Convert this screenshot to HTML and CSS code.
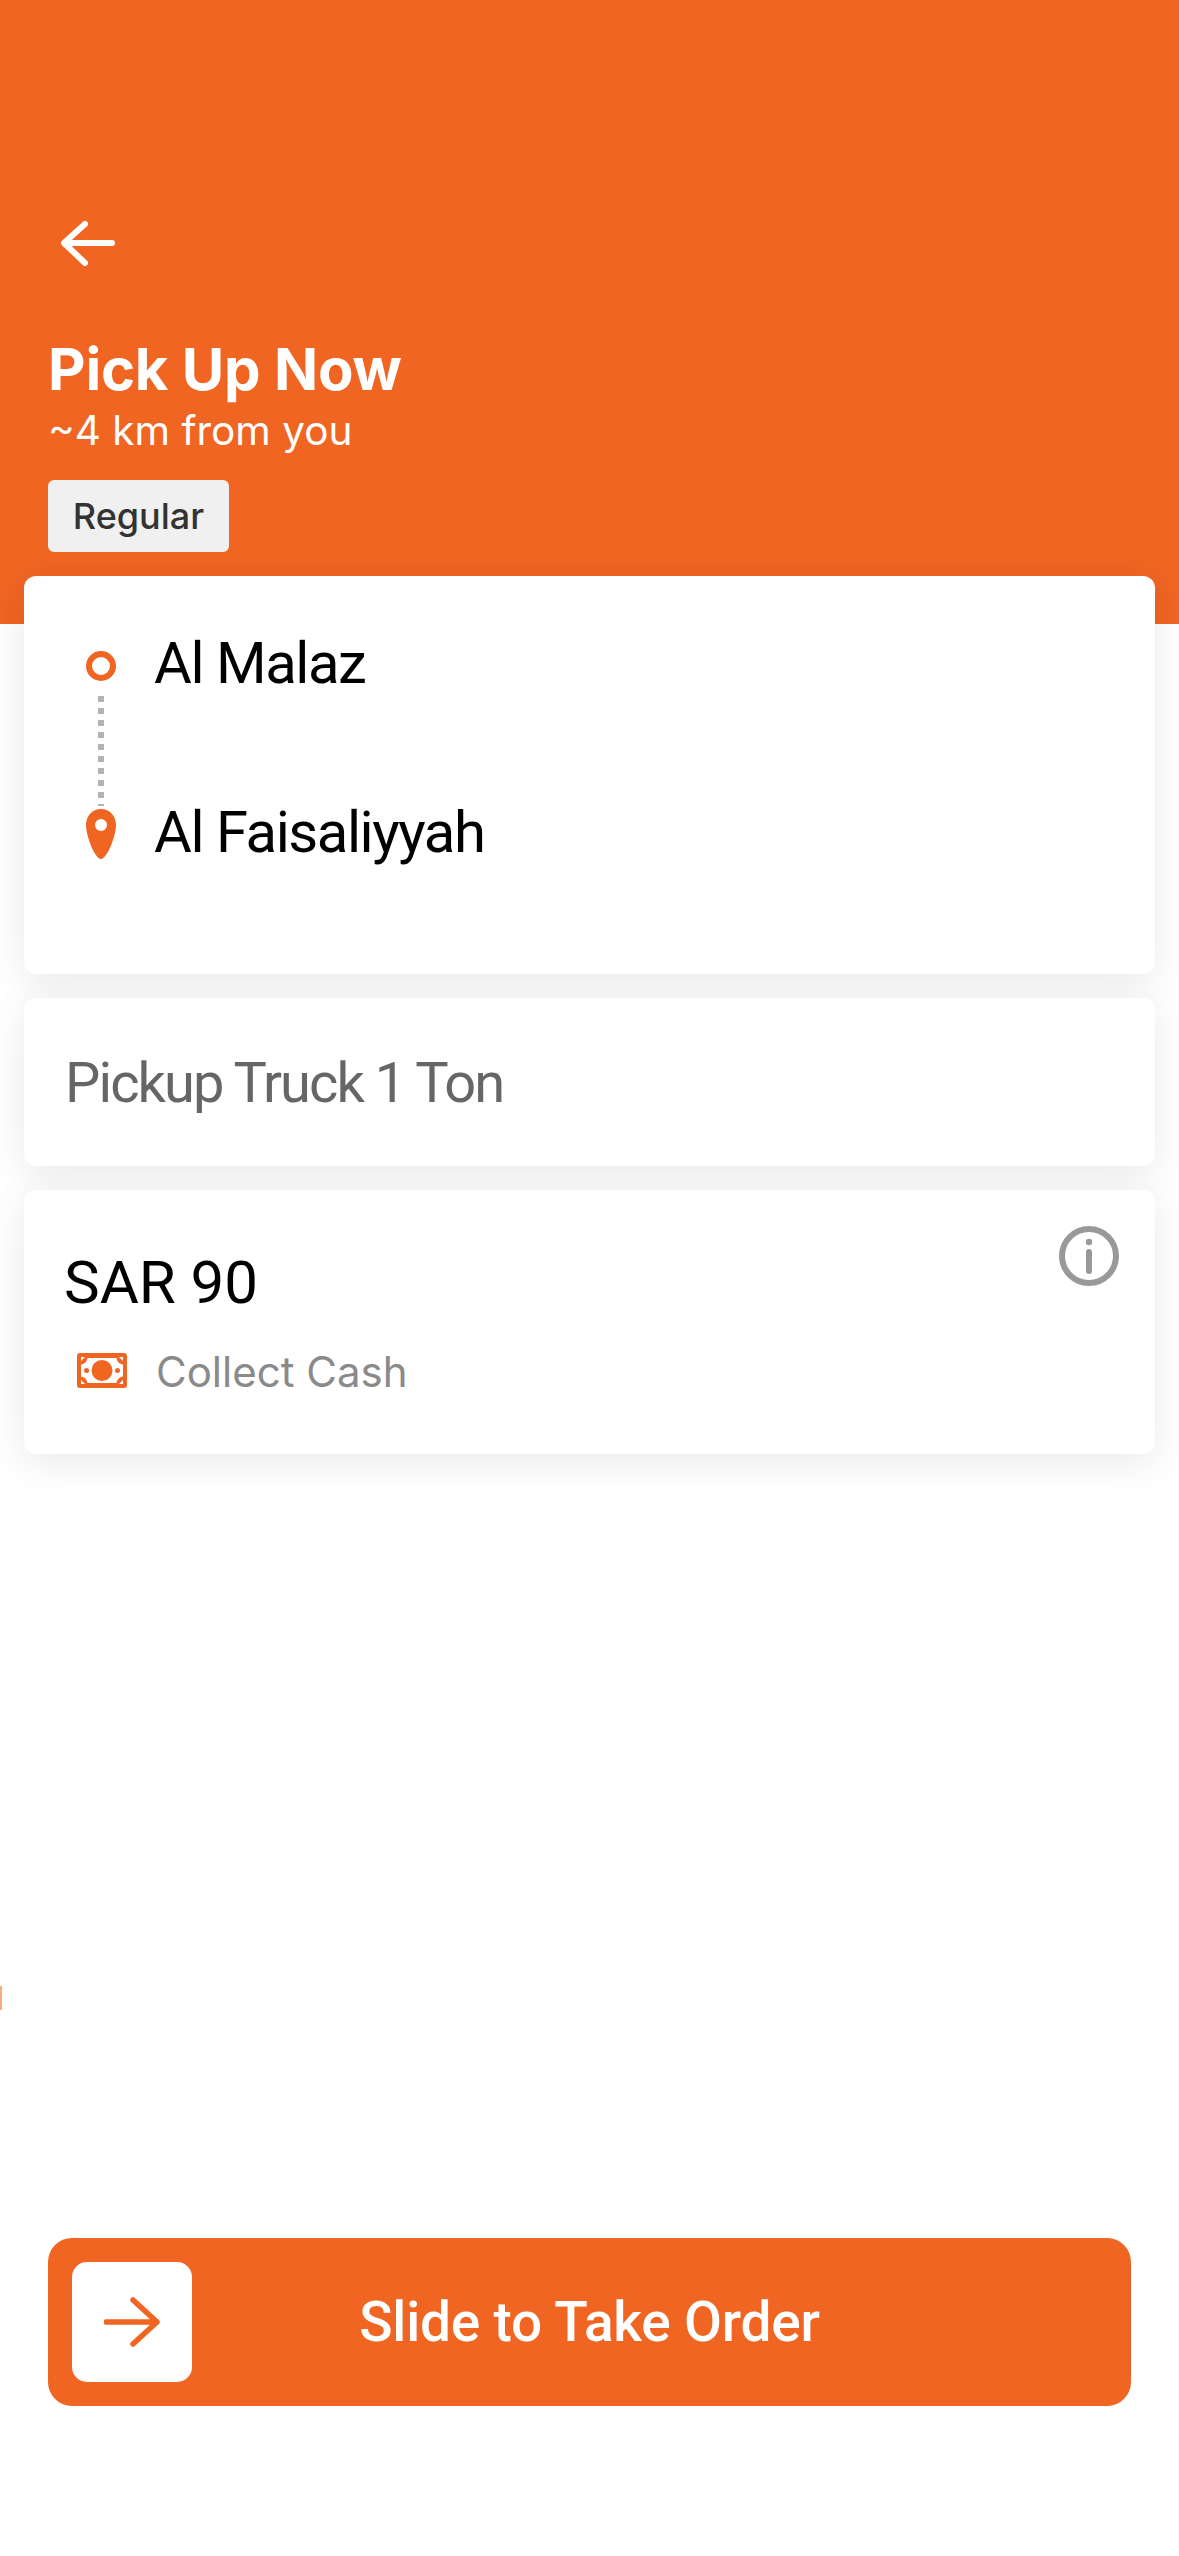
FILE: index.html
```html
<!DOCTYPE html>
<html lang="en">
<head>
<meta charset="utf-8">
<title>Pick Up Now</title>
<link rel="stylesheet" href="styles.css">
</head>
<body>
<div class="page">
  <header class="hero">
    <button class="back" aria-label="Back">
      <svg class="back-icon" viewBox="0 0 54 46"><path d="M51 23H4M24 4 3 23l21 20"/></svg>
    </button>
    <h1 class="title">Pick Up Now</h1>
    <p class="distance">~4 km from you</p>
    <span class="chip">Regular</span>
  </header>
  <main class="cards">
    <section class="card route">
      <div class="stop stop-start">
        <span class="marker"><span class="ring"></span></span>
        <span class="place">Al Malaz</span>
      </div>
      <div class="dots"></div>
      <div class="stop stop-end">
        <span class="marker">
          <svg class="pin" viewBox="0 0 32 52"><path fill-rule="evenodd" d="M16 1C7 1 1 8 1 17c0 11 9 34 15 34s15-23 15-34C31 8 25 1 16 1Zm0 10a6 6 0 1 1 0 12 6 6 0 0 1 0-12Z"/></svg>
        </span>
        <span class="place">Al Faisaliyyah</span>
      </div>
    </section>
    <section class="card vehicle">Pickup Truck 1 Ton</section>
    <section class="card fare">
      <div class="fare-row">
        <span class="price">SAR 90</span>
        <svg class="info" viewBox="0 0 60 60"><circle cx="30" cy="30" r="27"/><path d="M30 26v19"/><circle class="info-dot" cx="30" cy="16" r="3.2"/></svg>
      </div>
      <div class="collect">
        <svg class="cash" viewBox="0 0 50 35">
          <rect class="cash-bg" width="50" height="35" rx="3"/>
          <path class="cash-w" d="M10.500 5h29c.5 3.500 3 6 6.500 6.500v12c-3.500.5-6 3-6.500 6.500h-29c-.5-3.500-3-6-6.500-6.500v-12c3.500-.5 6-3 6.500-6.500Z"/>
          <path class="cash-w" d="M4 4h4L4 8ZM46 4h-4l4 4ZM4 31h4l-4-4ZM46 31h-4l4-4Z"/>
          <circle class="cash-o" cx="25" cy="17.500" r="10.500"/>
          <circle class="cash-o" cx="9.500" cy="17.500" r="2.500"/>
          <circle class="cash-o" cx="40.500" cy="17.500" r="2.500"/>
        </svg>
        <span class="collect-label">Collect Cash</span>
      </div>
    </section>
  </main>
  <div class="slider">
    <span class="handle">
      <svg class="handle-icon" viewBox="0 0 56 50"><path d="M2 25h50M29 3l24 22-24 22"/></svg>
    </span>
    <span class="slider-label">Slide to Take Order</span>
  </div>
  <span class="edge-mark"></span>
</div>
</body>
</html>
```
FILE: styles.css
```css
* { box-sizing: border-box; }
html, body { margin: 0; padding: 0; background: #fff; }
.page {
  position: relative;
  width: 1179px;
  height: 2556px;
  overflow: hidden;
  display: flex;
  flex-direction: column;
  font-family: Inter, "Liberation Sans", sans-serif;
}
.hero {
  height: 624px;
  background: #f06522;
  padding: 220px 0 0 48px;
  display: flex;
  flex-direction: column;
  align-items: flex-start;
  color: #fff;
}
.back {
  border: 0;
  padding: 0;
  margin: 0 0 0 13px;
  background: none;
  height: 46px;
}
.back-icon { display: block; width: 54px; height: 46px; fill: none; stroke: #fff; stroke-width: 6; stroke-linecap: round; stroke-linejoin: round; }
.title {
  margin: 68px 0 0;
  font-size: 58px;
  letter-spacing: -0.2px;
  line-height: 70px;
  font-weight: 700;
}
.distance {
  margin: 2px 0 0;
  font-size: 40.5px;
  line-height: 50px;
  font-weight: 400;
}
.chip {
  margin-top: 24px;
  width: 181px;
  height: 72px;
  background: #f0f0f0;
  border-radius: 6px;
  color: #333;
  font-size: 36px;
  font-weight: 450;
  display: flex;
  align-items: center;
  justify-content: center;
}
.cards {
  margin-top: -48px;
  padding: 0 24px;
  display: flex;
  flex-direction: column;
  gap: 24px;
  font-family: Roboto, "Liberation Sans", sans-serif;
}
.card {
  background: #fff;
  border-radius: 12px;
  box-shadow: 0 8px 40px rgba(0, 0, 0, .09);
}
.route { height: 398px; padding: 52px 0 0 60px; }
.stop { display: flex; align-items: center; height: 76px; }
.stop-start .place { margin-top: -6px; }
.stop-end { margin-top: -12px; }
.marker { width: 34px; display: flex; justify-content: center; margin-right: 36px; }
.ring { width: 30px; height: 30px; border: 6px solid #f06522; border-radius: 50%; }
.pin { display: block; width: 32px; height: 52px; margin-top: 3px; fill: #f06522; }
.place { font-size: 58px; letter-spacing: -1.45px; color: #000; }
.dots {
  margin: -8px 0 0 14px;
  width: 6px;
  height: 110px;
  background: repeating-linear-gradient(to bottom, #b3b3b3 0 6px, transparent 6px 12px);
}
.vehicle {
  height: 168px;
  padding-left: 41px;
  display: flex;
  align-items: center;
  font-size: 56px;
  letter-spacing: -1.9px;
  padding-top: 2px;
  color: #666;
}
.fare { height: 264px; padding: 60px 36px 0 40px; }
.fare-row { display: flex; justify-content: space-between; align-items: flex-start; }
.price { font-size: 60px; line-height: 66px; color: #000; }
.info { width: 60px; height: 60px; margin-top: -24px; fill: none; stroke: #999; stroke-width: 6; stroke-linecap: round; }
.info-dot { fill: #999; stroke: none; }
.collect { display: flex; align-items: center; margin: 28px 0 0 13px; }
.cash { width: 50px; height: 35px; margin-right: 29px; }
.cash-bg, .cash-o { fill: #f06522; }
.cash-w { fill: #fff; }
.collect-label { font-family: Inter, "Liberation Sans", sans-serif; font-size: 42px; line-height: 50px; margin-top: 3px; color: #8a8a8a; }
.slider {
  position: relative;
  margin: auto 48px 150px;
  height: 168px;
  border-radius: 24px;
  background: #f06522;
  display: flex;
  align-items: center;
  justify-content: center;
}
.handle {
  position: absolute;
  left: 24px;
  top: 24px;
  width: 120px;
  height: 120px;
  background: #fff;
  border-radius: 15px;
  display: flex;
  align-items: center;
  justify-content: center;
}
.handle-icon { width: 56px; height: 50px; fill: none; stroke: #f06522; stroke-width: 5.500; stroke-linecap: round; stroke-linejoin: round; }
.slider-label { font-family: Roboto, "Liberation Sans", sans-serif; font-size: 55px; letter-spacing: -0.2px; font-weight: 500; color: #fff; }
.edge-mark {
  position: absolute;
  left: 0;
  top: 1986px;
  width: 2px;
  height: 24px;
  background: #ffa97f;
}
```
